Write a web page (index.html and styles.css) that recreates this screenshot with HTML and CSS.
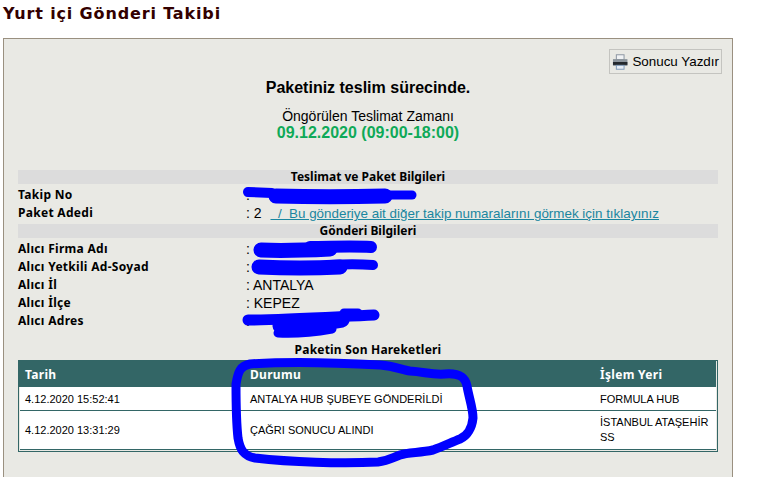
FILE: index.html
```html
<!DOCTYPE html>
<html lang="tr">
<head>
  <meta charset="UTF-8">
  <title>Yurt içi Gönderi Takibi</title>
  <link rel="stylesheet" href="styles.css">
</head>
<body>

  <h1 class="page-title">Yurt içi Gönderi Takibi</h1>

  <div class="panel">
    <div class="print-row">
      <button class="print-btn">
        <svg width="17" height="18" viewBox="0 0 17 18">
          <rect x="4.5" y="1.5" width="8" height="5" fill="#f0f2f4" stroke="#8a94a0"/>
          <rect x="1" y="6" width="15" height="7" fill="#8b949c"/>
          <rect x="1" y="9" width="15" height="3" fill="#23282d"/>
          <rect x="4.5" y="12.5" width="8" height="4" fill="#e8eef6" stroke="#7f9ab8"/>
        </svg>
        Sonucu Yazdır
      </button>
    </div>

    <h2 class="status">Paketiniz teslim sürecinde.</h2>
    <p class="eta-label">Öngörülen Teslimat Zamanı</p>
    <p class="eta-date">09.12.2020 (09:00-18:00)</p>

    <h3 class="section-bar first">Teslimat ve Paket Bilgileri</h3>
    <div class="info-row">
      <span class="info-label">Takip No</span>
      <span class="info-value">:</span>
    </div>
    <div class="info-row">
      <span class="info-label">Paket Adedi</span>
      <span class="info-value">: 2 <a href="#" class="more-link">&nbsp;&nbsp;/&nbsp; Bu gönderiye ait diğer takip numaralarını görmek için tıklayınız</a></span>
    </div>

    <h3 class="section-bar">Gönderi Bilgileri</h3>
    <div class="info-row">
      <span class="info-label">Alıcı Firma Adı</span>
      <span class="info-value">:</span>
    </div>
    <div class="info-row">
      <span class="info-label">Alıcı Yetkili Ad-Soyad</span>
      <span class="info-value">:</span>
    </div>
    <div class="info-row">
      <span class="info-label">Alıcı İl</span>
      <span class="info-value">: ANTALYA</span>
    </div>
    <div class="info-row">
      <span class="info-label">Alıcı İlçe</span>
      <span class="info-value">: KEPEZ</span>
    </div>
    <div class="info-row">
      <span class="info-label">Alıcı Adres</span>
      <span class="info-value">:</span>
    </div>

    <h3 class="moves-title">Paketin Son Hareketleri</h3>
    <table class="moves">
      <thead>
        <tr>
          <th class="col-date">Tarih</th>
          <th class="col-status">Durumu</th>
          <th>İşlem Yeri</th>
        </tr>
      </thead>
      <tbody>
        <tr class="row-short">
          <td>4.12.2020 15:52:41</td>
          <td>ANTALYA HUB ŞUBEYE GÖNDERİLDİ</td>
          <td>FORMULA HUB</td>
        </tr>
        <tr>
          <td>4.12.2020 13:31:29</td>
          <td>ÇAĞRI SONUCU ALINDI</td>
          <td>İSTANBUL ATAŞEHİR SS</td>
        </tr>
      </tbody>
    </table>
  </div>

  <!-- blue pen marks drawn over the screenshot -->
  <svg class="scribbles" width="759" height="477" viewBox="0 0 759 477" fill="none" stroke="#0000ff" stroke-linecap="round" stroke-linejoin="round">
    <path stroke-width="10" d="M248 192 L272 193"/>
    <path stroke-width="15" d="M276 196 C310 197 350 197 385 196"/>
    <path stroke-width="9" d="M385 195 L412 195"/>

    <path stroke-width="15" d="M261 250 C280 251 310 250 330 249"/>
    <path stroke-width="12" d="M310 247 C330 247 350 246 371 247"/>
    <path stroke-width="15" d="M259 267 C280 268 320 268 340 267"/>
    <path stroke-width="10" d="M330 265 C345 264 360 264 373 265"/>

    <path stroke-width="11" d="M248 320 C280 320 330 317 374 315"/>
    <path stroke-width="9" d="M344 313 L358 313"/>
    <path stroke-width="15" d="M280 326 C300 325 325 323 342 320"/>
    <path stroke-width="9" d="M278 333 C295 334 315 332 332 329"/>

    <path stroke-width="9" d="M236 384 C238 372 240 366 250 364 C290 361 345 363 380 365 C395 366 402 370 410 371 C425 372 432 375 445 374 C458 373 465 376 467 386 C469 398 473 408 473 418 C472 428 467 436 460 439 C450 443 442 447 433 450 C420 453 408 452 400 455 C392 458 388 461 378 462 C340 464 290 462 255 458 C244 456 240 450 238 438 C236 420 236 400 236 384"/>
  </svg>

</body>
</html>
```
FILE: styles.css
```css
* {
  box-sizing: border-box;
  margin: 0;
  padding: 0;
}

html, body {
  height: 477px;
  overflow: hidden;
}

body {
  position: relative;
  background-color: #fff;
  color: #000;
  font-family: 'Liberation Sans', Arial, sans-serif;
  font-size: 14px;
}

.page-title {
  font-family: 'DejaVu Sans', Verdana, sans-serif;
  font-size: 16px;
  line-height: 20px;
  letter-spacing: 0.85px;
  color: #300;
  padding: 4px 0 0 3px;
}

.panel {
  width: 730px;
  height: 439px;
  margin: 14px 0 0 3px;
  padding: 10px 14px 0 14px;
  background-color: #e9e9e4;
  border: 1px solid #9a9080;
  border-bottom: 0;
}

.print-row {
  display: flex;
  justify-content: flex-end;
  margin-right: -4px;
}

.print-btn {
  display: flex;
  align-items: center;
  gap: 4px;
  width: 113px;
  height: 25px;
  padding: 0 2px;
  background: transparent;
  border: 1px solid #c4c4c0;
  font-family: inherit;
  font-size: 13.4px;
  color: #000;
  white-space: nowrap;
}

.status {
  font-size: 16px;
  line-height: 20px;
  text-align: center;
  margin-top: 4px;
}

.eta-label {
  font-size: 14px;
  line-height: 16px;
  text-align: center;
  margin-top: 10px;
}

.eta-date {
  font-size: 16px;
  font-weight: bold;
  line-height: 18px;
  text-align: center;
  color: #0fa958;
}

.section-bar {
  font-family: 'Noto Sans', sans-serif;
  font-size: 12px;
  line-height: 14px;
  font-weight: bold;
  text-align: center;
  background-color: #dcdcdc;
  margin: 2px 0;
}

.section-bar.first {
  margin-top: 28px;
}

.info-row {
  display: grid;
  grid-template-columns: 228px 1fr;
  height: 18px;
  line-height: 18px;
}

.info-label {
  font-family: 'Noto Sans', sans-serif;
  font-size: 12px;
  font-weight: bold;
  letter-spacing: 0.3px;
}

.more-link {
  margin-left: 5px;
  font-size: 13.4px;
  color: #1a86a0;
}

.moves-title {
  font-family: 'Noto Sans', sans-serif;
  font-size: 12px;
  line-height: 14px;
  font-weight: bold;
  letter-spacing: 0.2px;
  text-align: center;
  margin-top: 13px;
}

.moves {
  width: 700px;
  margin-top: 3px;
  border: 1px solid #336666;
  border-collapse: separate;
  border-spacing: 0;
  padding: 0 1px 1px 1px;
  font-size: 11px;
}

.moves th {
  height: 26px;
  padding: 0 5px;
  background-color: #336666;
  color: #fff;
  font-family: 'Noto Sans', sans-serif;
  font-size: 12px;
  letter-spacing: 0.3px;
  text-align: left;
}

.moves th.col-date {
  width: 225px;
  box-shadow: -1px 0 0 #336666;
}

.moves th.col-status {
  width: 350px;
}

.moves td {
  height: 39px;
  padding: 0 5px;
  background-color: #fff;
  line-height: 15px;
  border-bottom: 1px solid #336666;
}

.moves .row-short td {
  height: 24px;
  padding-top: 2px;
}

.scribbles {
  position: absolute;
  left: 0;
  top: 0;
}
```
